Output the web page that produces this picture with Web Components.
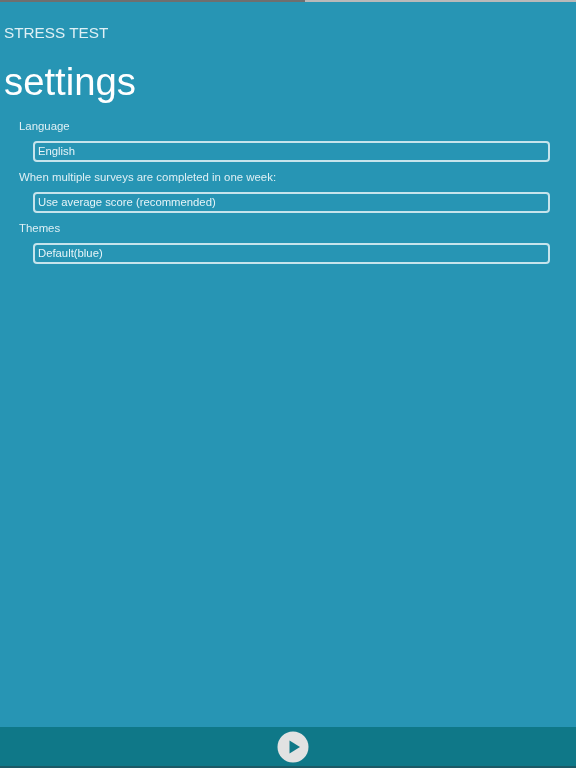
<!DOCTYPE html>
<html><head><meta charset="utf-8">
<style>
html,body{margin:0;padding:0;height:100%;background:#2795b4;overflow:hidden}
body{font-family:"Liberation Sans",Arial,sans-serif;color:#fff}
</style></head><body>
<template id="t-app"><style>
:host{display:flex;flex-direction:column;width:576px;height:768px;background:#2795b4;filter:blur(.5px)}
.load{display:flex;height:2px;flex:none}
.load i{display:block}
.load .a{width:305px;background:#6f6f6f}
.load .b{flex:1;background:#b9b9b9}
main{flex:1;min-height:0;display:flex;flex-direction:column}
</style><div class="load"><i class="a"></i><i class="b"></i></div><main><slot></slot></main><slot name="footer"></slot></template>

<template id="t-head"><style>
:host{display:block;padding:22px 0 0 4px}
.k{font-size:15.3px;line-height:17px;color:#dff0f5}
h1{margin:19px 0 0;font-weight:400;font-size:38.3px;line-height:44px;color:#fff}
</style><div class="k"><slot name="kicker"></slot></div><h1><slot></slot></h1></template>

<template id="t-field"><style>
:host{display:block;padding:0 26px 0 19px;margin-top:var(--gap,0)}
.l{font-size:11.4px;line-height:16px;color:#dff0f5}
.box{box-sizing:border-box;margin:7px 0 0 14px;height:21px;border:2px solid #c6e4ec;border-radius:4px;padding:0 3px;font-size:11.3px;line-height:17px;color:#e6f4f8}
</style><div class="l"><slot name="label"></slot></div><div class="box"><slot></slot></div></template>

<template id="t-foot"><style>
:host{display:flex;justify-content:center;align-items:center;flex:none;height:39px;margin-bottom:2px;padding-left:10px;background:#0f7888;box-shadow:0 2px 0 #1c5a66}
svg{display:block;width:32px;height:32px}
</style><svg viewBox="0 0 32 32"><circle cx="16" cy="16" r="15.5" fill="#e2e2e2"/><path d="M12.5 9.5 23 16 12.5 22.5Z" fill="#0f7888"/></svg></template>

<stress-app>
<page-head><span slot="kicker">STRESS TEST</span>settings</page-head>
<setting-field style="--gap:14px"><span slot="label">Language</span>English</setting-field>
<setting-field style="--gap:7px"><span slot="label">When multiple surveys are completed in one week:</span>Use average score (recommended)</setting-field>
<setting-field style="--gap:7px"><span slot="label">Themes</span>Default(blue)</setting-field>
<play-footer slot="footer"></play-footer>
</stress-app>
<script>
const def=(n,t)=>customElements.define(n,class extends HTMLElement{constructor(){super();this.attachShadow({mode:'open'}).appendChild(document.getElementById(t).content.cloneNode(true))}});
def('stress-app','t-app');def('page-head','t-head');def('setting-field','t-field');def('play-footer','t-foot');
</script>
</body></html>
